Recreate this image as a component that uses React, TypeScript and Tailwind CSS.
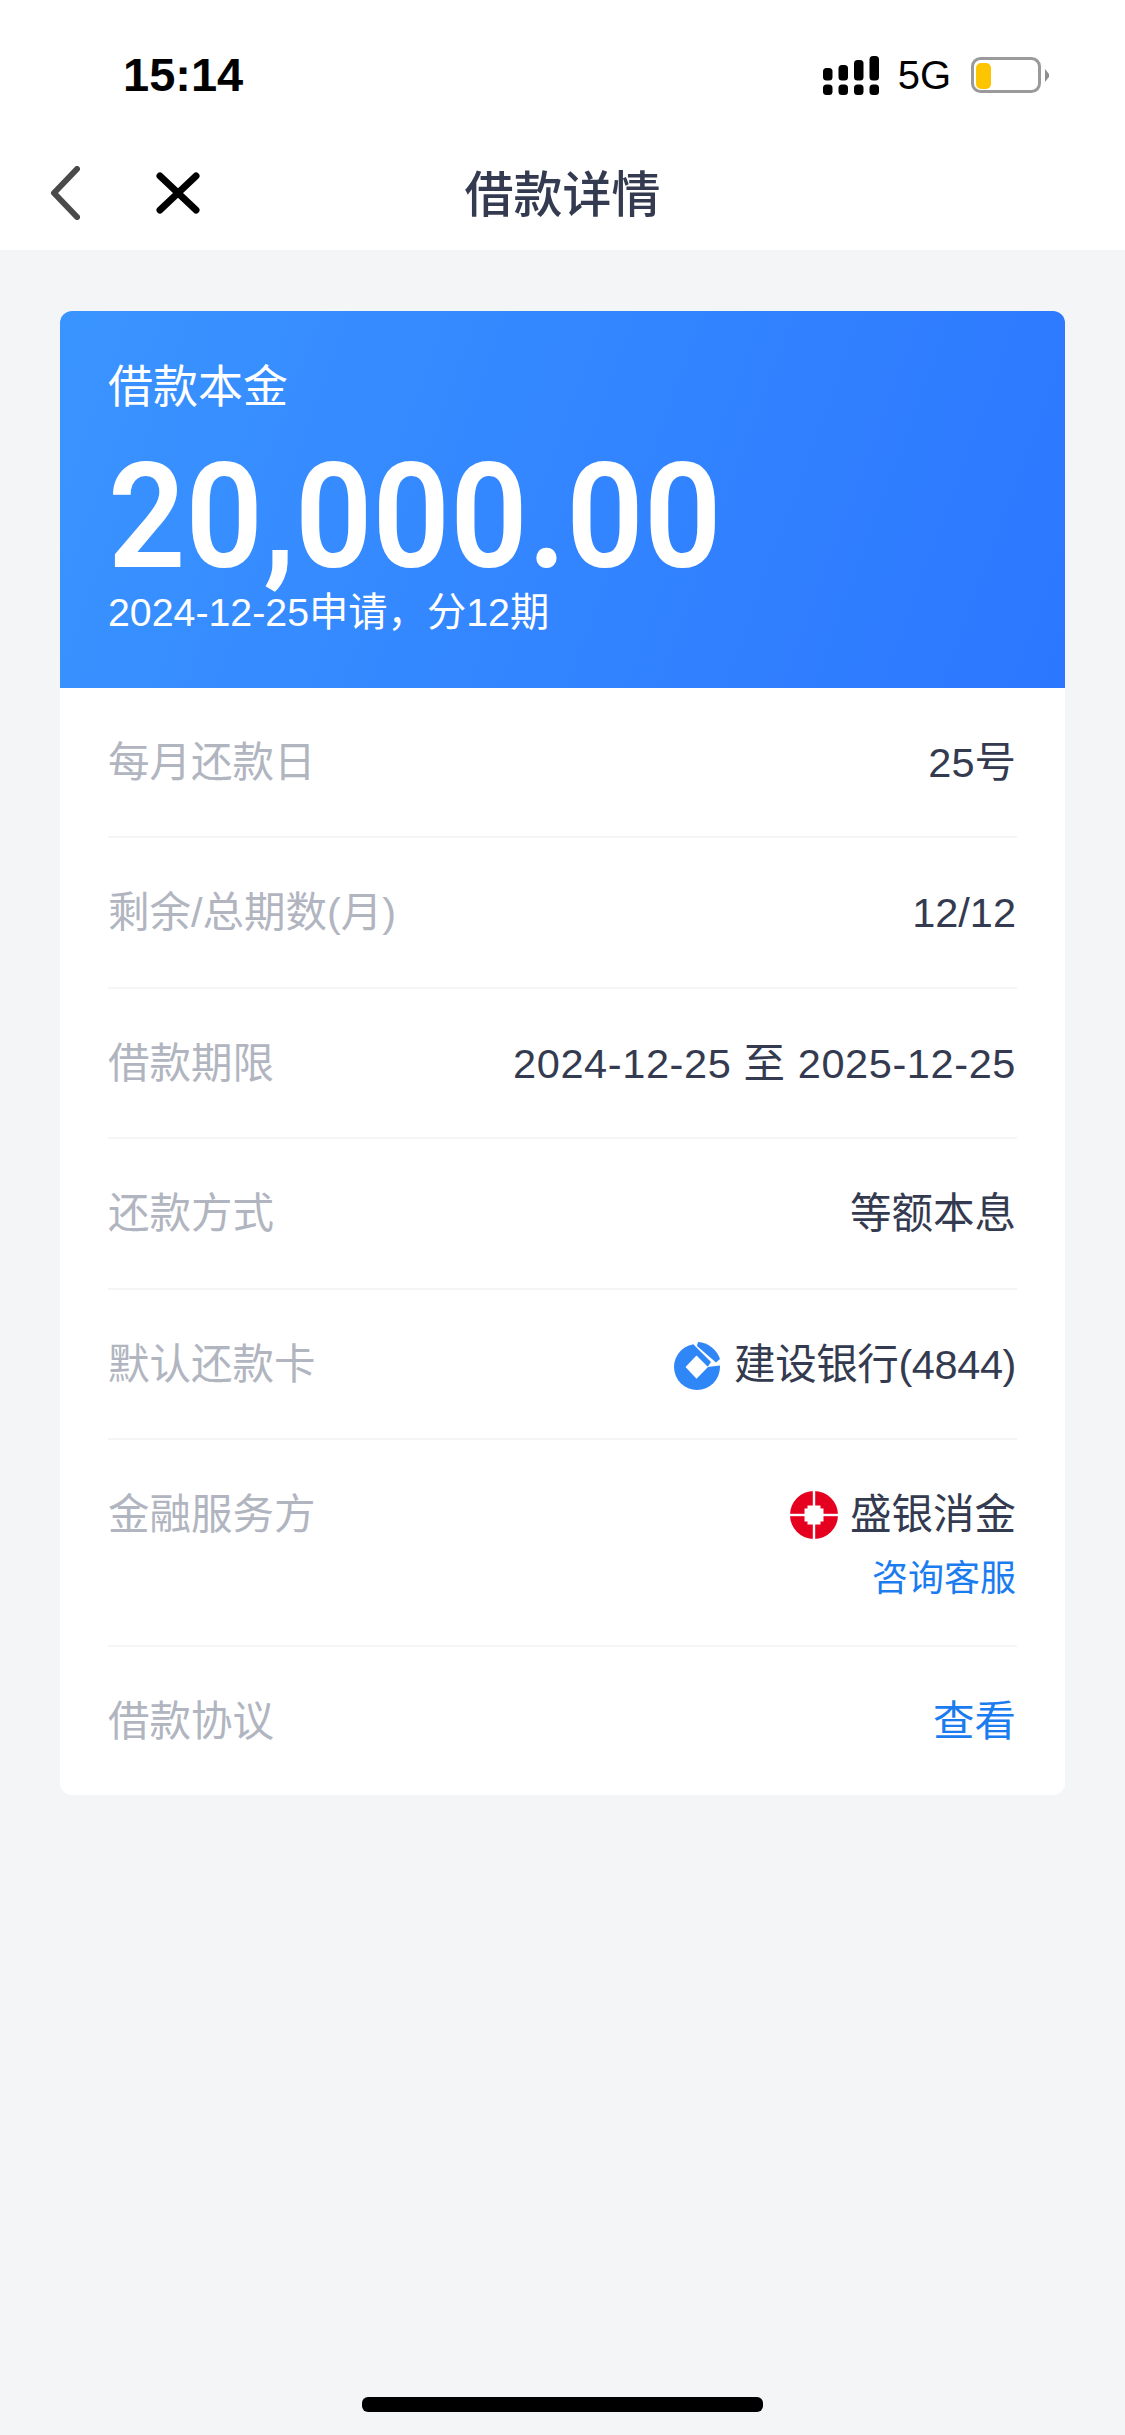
import { ReactNode } from 'react'

function SignalIcon() {
  const cols = [
    { x: 0, top: 12 },
    { x: 15.5, top: 9 },
    { x: 31, top: 4 },
    { x: 46.5, top: 0 },
  ]
  return (
    <svg width="56" height="39" viewBox="0 0 56 39" fill="#000">
      {cols.map((c) => (
        <g key={c.x}>
          <rect x={c.x} y={c.top} width="9.5" height={24.5 - c.top} rx="3.5" />
          <rect x={c.x} y="28.5" width="9.5" height="10.5" rx="3.5" />
        </g>
      ))}
    </svg>
  )
}

function BatteryIcon() {
  return (
    <svg width="78" height="36" viewBox="0 0 78 36">
      <rect x="1.5" y="1.5" width="67" height="33" rx="8" fill="#fff" stroke="#9a9a9a" strokeWidth="3" />
      <rect x="5" y="6" width="15" height="26" rx="5" fill="#fdc500" />
      <path d="M74 12l4 5v3l-4 5z" fill="#8f8f8f" />
    </svg>
  )
}

function CcbLogo() {
  return (
    <svg width="48" height="50" viewBox="0 0 48 50">
      <circle cx="23" cy="27" r="23" fill="#2f86f6" />
      <path d="M20 5l17 17-3.5 5 12.5-1.500h2V0H20z" fill="#fff" />
      <path d="M22.500 15.400 34 27 22.500 38.700 11.500 27z" fill="#fff" />
      <path d="M24 2a25 25 0 0 1 22 17l-4 3.500L23 6z" fill="#2f86f6" />
    </svg>
  )
}

function RedLogo() {
  return (
    <svg width="48" height="48" viewBox="0 0 48 48">
      <circle cx="24" cy="24" r="24" fill="#e60020" />
      <rect x="22.800" y="0" width="2.400" height="48" fill="#fff" />
      <rect x="0" y="22.800" width="48" height="2.400" fill="#fff" />
      <path d="M17.500 14.500h13v3h3v13h-3v3h-13v-3h-3v-13h3z" fill="#fff" />
    </svg>
  )
}

function Row({ label, children }: { label: string; children: ReactNode }) {
  return (
    <div className="flex h-[150.4px] items-center justify-between border-b-2 border-[#f4f5f7] pt-[2px]">
      <span className="text-[#b1b5c0]">{label}</span>
      <div className="mr-[1px] flex items-center text-[#343b50]">{children}</div>
    </div>
  )
}

export default function App() {
  return (
    <div className="flex h-[2435px] w-[1125px] flex-col overflow-hidden bg-[#f4f5f7] font-['Liberation_Sans','Noto_Sans_CJK_SC',sans-serif]">
      <div className="bg-white">
        {/* status bar */}
        <div className="flex h-[140px] items-start justify-between pr-[76px] pl-[123px] pt-[52px]">
          <span className="text-[47px] leading-[46px] font-bold text-black">15:14</span>
          <div className="flex items-center pt-[3px]">
            <SignalIcon />
            <span className="mr-[20px] ml-[19px] text-[40px] leading-[40px] text-black">5G</span>
            <BatteryIcon />
          </div>
        </div>
        {/* nav */}
        <div className="relative flex h-[110px] items-center justify-center">
          <div className="absolute top-[26px] left-[50px] flex items-center gap-[76px]">
            <svg width="30" height="54" viewBox="0 0 30 54" fill="none" stroke="#4a4a4a" strokeWidth="6" strokeLinecap="round" strokeLinejoin="round">
              <path d="M27 3 4 27l23 24" />
            </svg>
            <svg width="44" height="42" viewBox="0 0 44 42" fill="none" stroke="#000" strokeWidth="7" strokeLinecap="round">
              <path d="M4 4l36 34M40 4 4 38" />
            </svg>
          </div>
          <span className="text-[49px] leading-[60px] font-medium text-[#343b50]">借款详情</span>
        </div>
      </div>

      <div className="mx-[60px] mt-[61px] overflow-hidden rounded-[12px] bg-white">
        {/* amount */}
        <div className="flex h-[377px] flex-col bg-[linear-gradient(110deg,#3a94ff,#2c77ff)] pt-[47px] pl-[48px] text-white">
          <span className="text-[45px] leading-[60px]">借款本金</span>
          <span className="mt-[30px] h-[139px] origin-left scale-x-[0.93] font-['Roboto',sans-serif] text-[146px] leading-[139px] font-semibold whitespace-nowrap">
            20,000.00
          </span>
          <span className="text-[39.3px] leading-[50px]">2024-12-25申请，分12期</span>
        </div>

        {/* details */}
        <div className="px-[48px] text-[41.5px]">
          <Row label="每月还款日">25号</Row>
          <Row label="剩余/总期数(月)">12/12</Row>
          <Row label="借款期限">
            <span className="tracking-[0.6px]">2024-12-25 至 2025-12-25</span>
          </Row>
          <Row label="还款方式">等额本息</Row>
          <Row label="默认还款卡">
            <span className="mr-[12px]">
              <CcbLogo />
            </span>
            <span className="tracking-[-0.4px]">建设银行(4844)</span>
          </Row>
          <div className="flex h-[207px] justify-between border-b-2 border-[#f4f5f7] pt-[47px]">
            <span className="leading-[56px] text-[#b1b5c0]">金融服务方</span>
            <div className="mr-[1px] flex flex-col items-end">
              <div className="flex items-center text-[#343b50]">
                <span className="mr-[12px]">
                  <RedLogo />
                </span>
                <span className="leading-[56px]">盛银消金</span>
              </div>
              <span className="mt-[11px] text-[36px] leading-[50px] text-[#1b7cf0]">咨询客服</span>
            </div>
          </div>
          <div className="flex h-[148px] items-center justify-between pt-[2px]">
            <span className="text-[#b1b5c0]">借款协议</span>
            <span className="mr-[1px] text-[#1b7cf0]">查看</span>
          </div>
        </div>
      </div>

      {/* home indicator */}
      <div className="mx-auto mt-[602px] h-[15px] w-[401px] rounded-[6px] bg-black" />
    </div>
  )
}
